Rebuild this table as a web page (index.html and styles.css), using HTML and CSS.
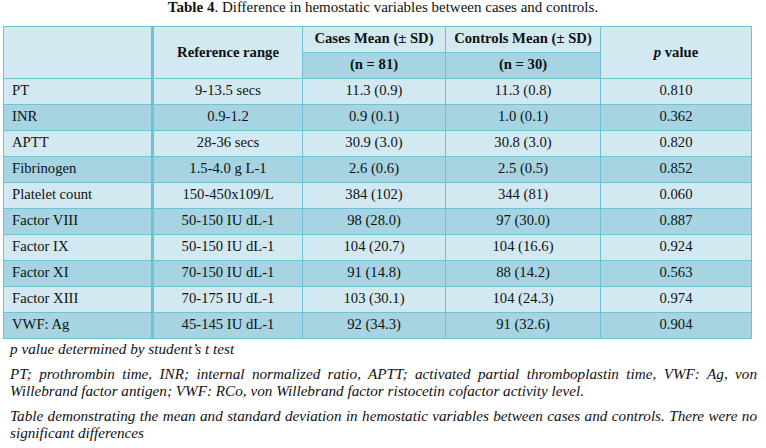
FILE: index.html
```html
<!DOCTYPE html>
<html>
<head>
<meta charset="utf-8">
<link rel="stylesheet" href="styles.css">
</head>
<body>
<div class="page">
  <p class="title"><b>Table 4</b>. Difference in hemostatic variables between cases and controls.</p>
  <table class="data">
    <colgroup>
      <col class="c1"><col class="c2"><col class="c3"><col class="c4"><col class="c5">
    </colgroup>
    <thead>
      <tr>
        <th rowspan="2" class="light first"></th>
        <th rowspan="2" class="light mid">Reference range</th>
        <th class="light">Cases Mean (± SD)</th>
        <th class="light">Controls Mean (± SD)</th>
        <th rowspan="2" class="light mid"><i>p</i> value</th>
      </tr>
      <tr>
        <th class="dark">(n = 81)</th>
        <th class="dark">(n = 30)</th>
      </tr>
    </thead>
    <tbody>
      <tr class="light"><td class="first">PT</td><td>9-13.5 secs</td><td>11.3 (0.9)</td><td>11.3 (0.8)</td><td>0.810</td></tr>
      <tr class="dark"><td class="first">INR</td><td>0.9-1.2</td><td>0.9 (0.1)</td><td>1.0 (0.1)</td><td>0.362</td></tr>
      <tr class="light"><td class="first">APTT</td><td>28-36 secs</td><td>30.9 (3.0)</td><td>30.8 (3.0)</td><td>0.820</td></tr>
      <tr class="dark"><td class="first">Fibrinogen</td><td>1.5-4.0 g L-1</td><td>2.6 (0.6)</td><td>2.5 (0.5)</td><td>0.852</td></tr>
      <tr class="light"><td class="first">Platelet count</td><td>150-450x109/L</td><td>384 (102)</td><td>344 (81)</td><td>0.060</td></tr>
      <tr class="dark"><td class="first">Factor VIII</td><td>50-150 IU dL-1</td><td>98 (28.0)</td><td>97 (30.0)</td><td>0.887</td></tr>
      <tr class="light"><td class="first">Factor IX</td><td>50-150 IU dL-1</td><td>104 (20.7)</td><td>104 (16.6)</td><td>0.924</td></tr>
      <tr class="dark"><td class="first">Factor XI</td><td>70-150 IU dL-1</td><td>91 (14.8)</td><td>88 (14.2)</td><td>0.563</td></tr>
      <tr class="light"><td class="first">Factor XIII</td><td>70-175 IU dL-1</td><td>103 (30.1)</td><td>104 (24.3)</td><td>0.974</td></tr>
      <tr class="dark"><td class="first">VWF: Ag</td><td>45-145 IU dL-1</td><td>92 (34.3)</td><td>91 (32.6)</td><td>0.904</td></tr>
    </tbody>
  </table>
  <div class="notes">
    <p>p value determined by student’s t test</p>
    <p>PT; prothrombin time, INR; internal normalized ratio, APTT; activated partial thromboplastin time, VWF: Ag, von Willebrand factor antigen; VWF: RCo, von Willebrand factor ristocetin cofactor activity level.</p>
    <p>Table demonstrating the mean and standard deviation in hemostatic variables between cases and controls. There were no significant differences</p>
  </div>
</div>
</body>
</html>
```

FILE: styles.css
```css
html, body {
  margin: 0;
  padding: 0;
  background: #ffffff;
}

body {
  font-family: "Liberation Serif", "Times New Roman", serif;
  font-size: 14.67px;
  color: #111111;
}

.page {
  padding: 0 9px 0 3px;
}

.title {
  margin: 0;
  font-size: 15px;
  line-height: 15px;
  text-align: center;
  padding-left: 6px;
}

.data {
  margin-top: 11px;
  border-collapse: collapse;
  width: 748px;
  table-layout: fixed;
  border: 1px solid #6fc1d6;
}

.c1 { width: 149px; }
.c2 { width: 150px; }
.c3 { width: 143px; }
.c4 { width: 155px; }
.c5 { width: 151px; }

.data tr {
  height: 26px;
}

.data th,
.data td {
  border: 1px solid #6fc1d6;
  padding: 0 8px;
  text-align: center;
  line-height: 17px;
}

.data th {
  font-weight: bold;
  vertical-align: top;
  padding-top: 3px;
}

.data th.mid {
  vertical-align: middle;
  padding-top: 0;
}

.data td {
  vertical-align: top;
  padding-top: 3px;
}

.data .first {
  text-align: left;
  border-right: 3px solid #6fc1d6;
}

.light,
.light td {
  background: #d2e9f1;
}

.dark,
.dark td {
  background: #a6d4e2;
}

.notes {
  padding-left: 7px;
  font-size: 15.2px;
  font-style: italic;
  line-height: 17px;
  text-align: justify;
}

.notes p {
  margin: 1px 0 8px 0;
}
```
